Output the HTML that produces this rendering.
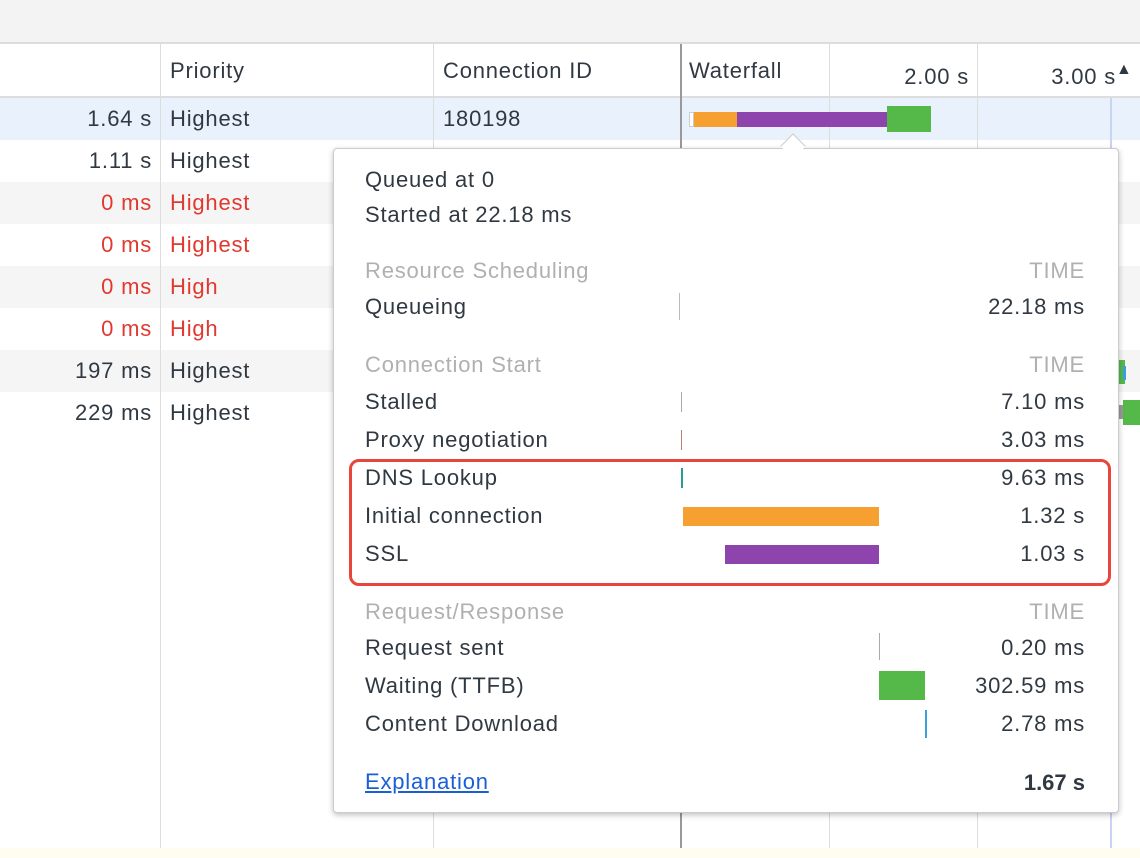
<!DOCTYPE html>
<html><head><meta charset="utf-8"><style>
*{margin:0;padding:0;box-sizing:border-box}
body{width:1140px;height:858px;overflow:hidden;background:#fff;font-family:"Liberation Sans",sans-serif;font-size:22px;letter-spacing:0.8px;color:#303942;position:relative}
.a{position:absolute}
.t{position:absolute;line-height:24px;white-space:nowrap}
.r{text-align:right}
.red{color:#e0392f}
.g{color:#b0b0b0}
</style></head><body>
<div class="a" style="left:0;top:0;width:1140px;height:44px;background:#f3f3f3;border-bottom:2px solid #ddd"></div>
<div class="a" style="left:0;top:96px;width:1140px;height:2px;background:#ddd"></div>
<div class="a" style="left:0;top:98px;width:1140px;height:42px;background:#e9f1fc"></div>
<div class="a" style="left:0;top:182px;width:1140px;height:42px;background:#f5f5f5"></div>
<div class="a" style="left:0;top:266px;width:1140px;height:42px;background:#f5f5f5"></div>
<div class="a" style="left:0;top:350px;width:1140px;height:42px;background:#f5f5f5"></div>
<div class="a" style="left:0;top:848px;width:1140px;height:10px;background:#fffdf0"></div>
<div class="a" style="left:160px;top:44px;width:1px;height:804px;background:#ddd"></div>
<div class="a" style="left:433px;top:44px;width:1px;height:804px;background:#ddd"></div>
<div class="a" style="left:680px;top:44px;width:2px;height:804px;background:#999"></div>
<div class="a" style="left:829px;top:44px;width:1px;height:804px;background:#ddd"></div>
<div class="a" style="left:977px;top:44px;width:1px;height:804px;background:#ddd"></div>
<div class="a" style="left:1110px;top:98px;width:2px;height:750px;background:#c8d4f4"></div>
<div class="t" style="left:170px;top:59px">Priority</div>
<div class="t" style="left:443px;top:59px">Connection ID</div>
<div class="t" style="left:689px;top:59px">Waterfall</div>
<div class="t r" style="left:830px;width:139px;top:65px">2.00 s</div>
<div class="t r" style="left:980px;width:136px;top:65px">3.00 s</div>
<div class="t" style="left:1116px;top:58px;font-size:16px">▲</div>
<div class="t r" style="left:0;width:152px;top:107px">1.64 s</div><div class="t" style="left:170px;top:107px">Highest</div><div class="t" style="left:443px;top:107px">180198</div>
<div class="t r" style="left:0;width:152px;top:149px">1.11 s</div><div class="t" style="left:170px;top:149px">Highest</div>
<div class="t r red" style="left:0;width:152px;top:191px">0 ms</div><div class="t red" style="left:170px;top:191px">Highest</div>
<div class="t r red" style="left:0;width:152px;top:233px">0 ms</div><div class="t red" style="left:170px;top:233px">Highest</div>
<div class="t r red" style="left:0;width:152px;top:275px">0 ms</div><div class="t red" style="left:170px;top:275px">High</div>
<div class="t r red" style="left:0;width:152px;top:317px">0 ms</div><div class="t red" style="left:170px;top:317px">High</div>
<div class="t r" style="left:0;width:152px;top:359px">197 ms</div><div class="t" style="left:170px;top:359px">Highest</div>
<div class="t r" style="left:0;width:152px;top:401px">229 ms</div><div class="t" style="left:170px;top:401px">Highest</div>
<div class="a" style="left:689px;top:112px;width:5px;height:15px;background:#fff;border:1px solid #ccc"></div>
<div class="a" style="left:694px;top:112px;width:43px;height:15px;background:#f5a030"></div>
<div class="a" style="left:737px;top:112px;width:150px;height:15px;background:#8e44ad"></div>
<div class="a" style="left:887px;top:106px;width:44px;height:26px;background:#54b948"></div>
<div class="a" style="left:1117px;top:360px;width:8px;height:24px;background:#54b948"></div>
<div class="a" style="left:1123px;top:366px;width:3px;height:14px;background:#3aa0e0"></div>
<div class="a" style="left:1117px;top:405px;width:6px;height:14px;background:#999"></div>
<div class="a" style="left:1123px;top:400px;width:17px;height:25px;background:#54b948"></div>
<div class="a" style="left:333px;top:148px;width:786px;height:665px;background:#fff;border:1px solid #ccc;border-radius:4px;box-shadow:0 2px 6px rgba(0,0,0,.25)"></div>
<div class="a" style="left:784px;top:137px;width:18px;height:18px;background:#fff;border-left:1px solid #ccc;border-top:1px solid #ccc;transform:rotate(45deg)"></div>
<div class="t" style="left:365px;top:168px">Queued at 0</div>
<div class="t" style="left:365px;top:203px">Started at 22.18 ms</div>
<div class="t g" style="left:365px;top:259px">Resource Scheduling</div><div class="t g r" style="left:900px;width:185px;top:259px">TIME</div>
<div class="t" style="left:365px;top:295px">Queueing</div><div class="t r" style="left:900px;width:185px;top:295px">22.18 ms</div>
<div class="t g" style="left:365px;top:353px">Connection Start</div><div class="t g r" style="left:900px;width:185px;top:353px">TIME</div>
<div class="t" style="left:365px;top:390px">Stalled</div><div class="t r" style="left:900px;width:185px;top:390px">7.10 ms</div>
<div class="t" style="left:365px;top:428px">Proxy negotiation</div><div class="t r" style="left:900px;width:185px;top:428px">3.03 ms</div>
<div class="t" style="left:365px;top:466px">DNS Lookup</div><div class="t r" style="left:900px;width:185px;top:466px">9.63 ms</div>
<div class="t" style="left:365px;top:504px">Initial connection</div><div class="t r" style="left:900px;width:185px;top:504px">1.32 s</div>
<div class="t" style="left:365px;top:542px">SSL</div><div class="t r" style="left:900px;width:185px;top:542px">1.03 s</div>
<div class="t g" style="left:365px;top:600px">Request/Response</div><div class="t g r" style="left:900px;width:185px;top:600px">TIME</div>
<div class="t" style="left:365px;top:636px">Request sent</div><div class="t r" style="left:900px;width:185px;top:636px">0.20 ms</div>
<div class="t" style="left:365px;top:674px">Waiting (TTFB)</div><div class="t r" style="left:900px;width:185px;top:674px">302.59 ms</div>
<div class="t" style="left:365px;top:712px">Content Download</div><div class="t r" style="left:900px;width:185px;top:712px">2.78 ms</div>
<div class="t" style="left:365px;top:770px;color:#1a5ed8;text-decoration:underline">Explanation</div><div class="t r" style="left:900px;width:185px;top:771px;font-weight:bold;letter-spacing:0">1.67 s</div>
<div class="a" style="left:679px;top:293px;width:1px;height:27px;background:#bbb"></div>
<div class="a" style="left:681px;top:392px;width:1px;height:20px;background:#aaa"></div>
<div class="a" style="left:681px;top:430px;width:1px;height:20px;background:#c08070"></div>
<div class="a" style="left:681px;top:468px;width:2px;height:20px;background:#2a9d8f"></div>
<div class="a" style="left:683px;top:507px;width:196px;height:19px;background:#f5a030"></div>
<div class="a" style="left:725px;top:545px;width:154px;height:19px;background:#8e44ad"></div>
<div class="a" style="left:879px;top:633px;width:1px;height:27px;background:#aaa"></div>
<div class="a" style="left:879px;top:671px;width:46px;height:29px;background:#54b948"></div>
<div class="a" style="left:925px;top:710px;width:2px;height:28px;background:#3aa0e0"></div>
<div class="a" style="left:349px;top:459px;width:762px;height:127px;border:3px solid #e8463a;border-radius:10px"></div>
</body></html>
